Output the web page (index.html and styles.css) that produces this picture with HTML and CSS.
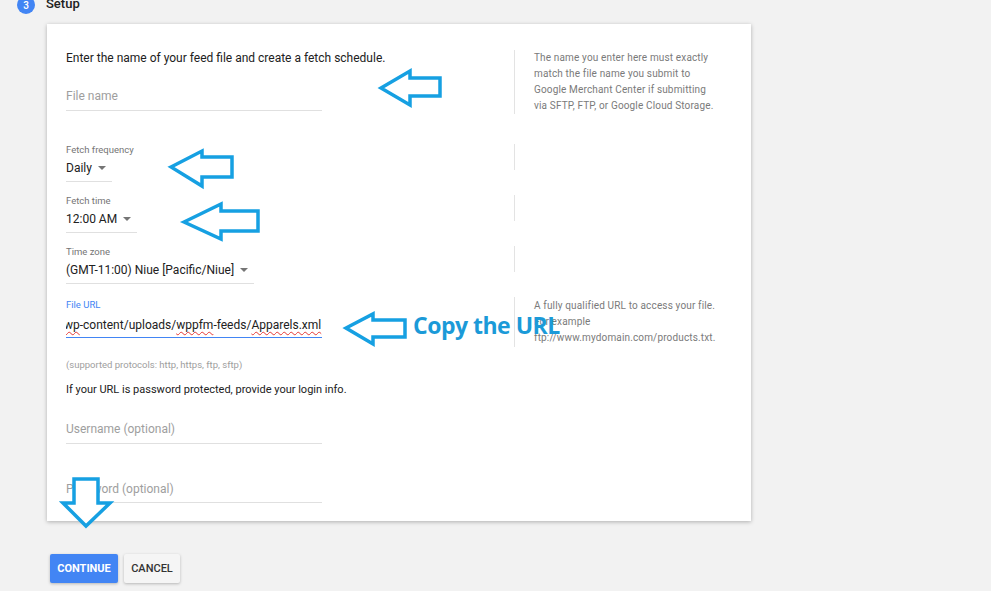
FILE: index.html
```html
<!DOCTYPE html>
<html>
<head>
<meta charset="utf-8">
<title>Setup</title>
<link rel="stylesheet" href="styles.css">
</head>
<body>
<div class="page">
  <div class="step">
    <span class="step-num">3</span>
    <span class="step-title">Setup</span>
  </div>

  <div class="card">
    <div class="row">
      <div class="main">
        <p class="intro">Enter the name of your feed file and create a fetch schedule.</p>
        <div class="field field-first"><span class="placeholder">File name</span></div>
      </div>
      <div class="help">
        <span class="help-line">The name you enter here must exactly</span>
        <span class="help-line">match the file name you submit to</span>
        <span class="help-line">Google Merchant Center if submitting</span>
        <span class="help-line">via SFTP, FTP, or Google Cloud Storage.</span>
      </div>
    </div>

    <div class="row row-freq">
      <div class="main">
        <span class="label">Fetch frequency</span>
        <span class="select-value">Daily<i class="caret"></i></span>
      </div>
      <div class="help help-empty"></div>
    </div>

    <div class="row row-next">
      <div class="main">
        <span class="label">Fetch time</span>
        <span class="select-value">12:00 AM<i class="caret"></i></span>
      </div>
      <div class="help help-empty"></div>
    </div>

    <div class="row row-next">
      <div class="main">
        <span class="label">Time zone</span>
        <span class="select-value">(GMT-11:00) Niue [Pacific/Niue]<i class="caret"></i></span>
      </div>
      <div class="help help-empty"></div>
    </div>

    <div class="row row-next">
      <div class="main">
        <span class="label label-focus">File URL</span>
        <div class="url-field">
          <span class="url-text"><span class="typo">wp</span>-content/uploads/<span class="typo">wppfm</span>-feeds/<span class="typo">Apparels.xml</span><i class="cursor"></i></span>
        </div>
      </div>
      <div class="help help-url">
        <span class="help-line">A fully qualified URL to access your file.</span>
        <span class="help-line">For example</span>
        <span class="help-line">ftp://www.mydomain.com/products.txt.</span>
      </div>
    </div>

    <p class="hint">(supported protocols: http, https, ftp, sftp)</p>
    <p class="login">If your URL is password protected, provide your login info.</p>
    <div class="field field-user"><span class="placeholder">Username (optional)</span></div>
    <div class="field field-pass"><span class="placeholder">Password (optional)</span></div>
  </div>

  <div class="actions">
    <button class="btn btn-primary">CONTINUE</button>
    <button class="btn btn-flat">CANCEL</button>
  </div>
</div>

<svg class="annotations" width="991" height="591" viewBox="0 0 991 591" xmlns="http://www.w3.org/2000/svg">
  <g fill="#ffffff" stroke="#16a0e2" stroke-width="3.5" stroke-linejoin="miter">
    <path d="M381 88 L410 71 L410 78 L440 78 L440 96 L410 96 L410 105 Z"/>
    <path d="M171 167 L202 151 L202 157 L232 157 L232 177 L202 177 L202 186 Z"/>
    <path d="M184 222 L221 204 L221 211 L258 211 L258 231 L221 231 L221 239 Z"/>
    <path d="M346 328 L373 314 L373 320 L405 320 L405 337 L373 337 L373 344 Z"/>
    <path d="M74 479 L98 479 L98 503 L110 503 L86 526 L63 503 L74 503 Z"/>
  </g>
</svg>
<span class="callout">Copy the URL</span>
</body>
</html>
```

FILE: styles.css
```css
* {
  box-sizing: border-box;
}

html,
body {
  margin: 0;
  padding: 0;
}

body {
  position: relative;
  width: 991px;
  height: 591px;
  overflow: hidden;
  background: #f2f2f2;
  font-family: Roboto, "Liberation Sans", Arial, sans-serif;
  color: #212121;
}

.step {
  display: flex;
  align-items: center;
  gap: 11px;
  height: 18px;
  margin-top: -4px;
  padding-left: 17px;
}

.step-num {
  display: flex;
  align-items: center;
  justify-content: center;
  width: 18px;
  height: 18px;
  border-radius: 50%;
  background: #4285f4;
  color: #ffffff;
  font-size: 10px;
  font-weight: 500;
}

.step-title {
  margin-top: -3px;
  font-size: 13px;
  font-weight: 500;
  line-height: 18px;
  color: #212121;
}

.card {
  width: 704px;
  margin: 10px 0 0 47px;
  padding: 26px 0 18px 19px;
  background: #ffffff;
  box-shadow: 0 1px 4px rgba(0, 0, 0, 0.28);
}

.row {
  display: flex;
  align-items: flex-start;
}

.row-freq {
  margin-top: 30px;
}

.row-next {
  margin-top: 13px;
}

.main {
  display: flex;
  flex-direction: column;
  align-items: flex-start;
  width: 448px;
}

.help {
  display: flex;
  flex-direction: column;
  width: 208px;
  padding-left: 19px;
  border-left: 1px solid #e3e3e3;
  font-size: 10px;
  line-height: 16px;
  letter-spacing: 0.15px;
  color: #7a7a7a;
}

.help-line {
  white-space: nowrap;
}

.help-empty {
  height: 26px;
}

.help-url {
  padding-top: 1px;
  padding-bottom: 1px;
}

.intro {
  margin: 0;
  font-size: 12px;
  line-height: 16px;
  color: #212121;
}

.login {
  margin: 11px 0 0;
  font-size: 11px;
  line-height: 16px;
  color: #212121;
}

.field {
  width: 256px;
  padding-bottom: 6px;
  border-bottom: 1px solid #e0e0e0;
  font-size: 12px;
  line-height: 16px;
}

.placeholder {
  color: #9e9e9e;
}

.field-first {
  margin-top: 22px;
}

.label {
  font-size: 9.5px;
  line-height: 12px;
  color: #757575;
}

.label-focus {
  margin-top: 2px;
  color: #4285f4;
}

.select-value {
  display: inline-flex;
  align-items: center;
  margin-top: 4px;
  padding-right: 6px;
  padding-bottom: 5px;
  border-bottom: 1px solid #e0e0e0;
  font-size: 12px;
  line-height: 16px;
  color: #212121;
}

.caret {
  width: 0;
  height: 0;
  margin-left: 6px;
  border-left: 4px solid transparent;
  border-right: 4px solid transparent;
  border-top: 4px solid #757575;
}

.url-field {
  width: 256px;
  margin-top: 6px;
  padding-bottom: 4px;
  border-bottom: 1px solid #4285f4;
  overflow: hidden;
  white-space: nowrap;
  font-size: 12px;
  line-height: 16px;
}

.url-text {
  display: inline-flex;
  align-items: center;
  margin-left: -2px;
  color: #212121;
}

.typo {
  text-decoration: underline wavy #e53935;
  text-decoration-thickness: 1px;
  text-underline-offset: 2px;
}

.cursor {
  display: inline-block;
  width: 1px;
  height: 15px;
  margin-left: 1px;
  background: #000000;
}

.hint {
  margin: 12px 0 0;
  font-size: 9.5px;
  line-height: 12px;
  color: #9e9e9e;
}

.field-user {
  margin-top: 23px;
}

.field-pass {
  margin-top: 37px;
  padding-bottom: 5px;
}

.actions {
  display: flex;
  gap: 6px;
  margin: 33px 0 0 50px;
}

.btn {
  height: 29px;
  padding: 0;
  border: 0;
  border-radius: 2px;
  font-family: Roboto, "Liberation Sans", Arial, sans-serif;
  font-size: 11px;
  box-shadow: 0 1px 3px rgba(0, 0, 0, 0.25);
}

.btn-primary {
  width: 68px;
  background: #4285f4;
  color: #ffffff;
  font-weight: 700;
}

.btn-flat {
  width: 56px;
  background: #f5f5f5;
  color: #333333;
  font-weight: 500;
}

.annotations {
  position: absolute;
  left: 0;
  top: 0;
  pointer-events: none;
}

.callout {
  position: absolute;
  left: 413px;
  top: 314px;
  font-family: "Open Sans", "Liberation Sans", sans-serif;
  font-size: 23px;
  font-weight: 700;
  line-height: 23px;
  letter-spacing: -0.5px;
  color: #1b9ad8;
  white-space: nowrap;
}
```
